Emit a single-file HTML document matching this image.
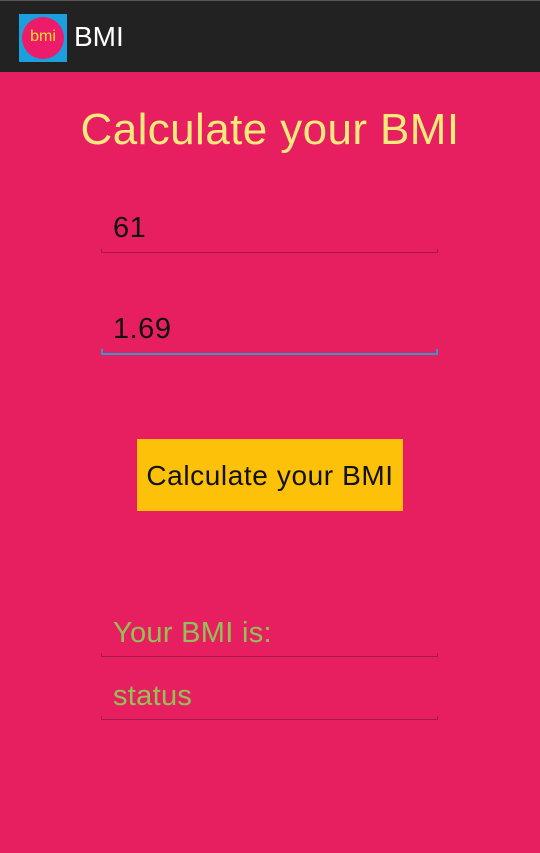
<!DOCTYPE html>
<html><head><style>
body{margin:0;width:540px;height:853px;background:#e71f61;font-family:"Liberation Sans",sans-serif;position:relative;overflow:hidden}
.bar{position:absolute;left:0;top:0;width:540px;height:72px;background:#222;border-top:1px solid #555;box-sizing:border-box}
.bar .ic{position:absolute;left:19px;top:13px;width:48px;height:48px;background:#1ba0dd}
.bar .ic div{position:absolute;left:3px;top:3px;width:42px;height:42px;border-radius:50%;background:#ec1c6b;color:#f7e12a;font-size:16px;text-align:center;line-height:40px}
.bar .t{position:absolute;left:74px;top:20px;color:#fff;font-size:28px}
.a{position:absolute;white-space:nowrap}
.ul{position:absolute;left:101px;width:337px;height:4px;border:1px solid #a5184e;border-top:none;box-sizing:border-box}
</style></head><body>
<div class="bar"><div class="ic"><div>bmi</div></div><div class="t">BMI</div></div>
<div class="a" style="left:0;width:540px;text-align:center;top:105px;font-size:44px;letter-spacing:0.4px;color:#f5ea7c">Calculate your BMI</div>
<div class="a" style="left:113px;top:212px;font-size:29px;letter-spacing:0.5px;color:#111">61</div>
<div class="ul" style="top:249px"></div>
<div class="a" style="left:113px;top:313px;font-size:29px;letter-spacing:0.5px;color:#111">1.69</div>
<div class="ul" style="top:349px;height:6px;border:2px solid #3399cc;border-top:none"></div>
<div class="a" style="left:137px;top:439px;width:266px;height:72px;background:#fec10a;text-align:center;line-height:74px;font-size:28px;letter-spacing:0.6px;color:#111">Calculate your BMI</div>
<div class="a" style="left:113px;top:617px;font-size:29px;letter-spacing:0.3px;color:#93c254">Your BMI is:</div>
<div class="ul" style="top:653px"></div>
<div class="a" style="left:113px;top:680px;font-size:29px;letter-spacing:0.3px;color:#93c254">status</div>
<div class="ul" style="top:716px"></div>
</body></html>
